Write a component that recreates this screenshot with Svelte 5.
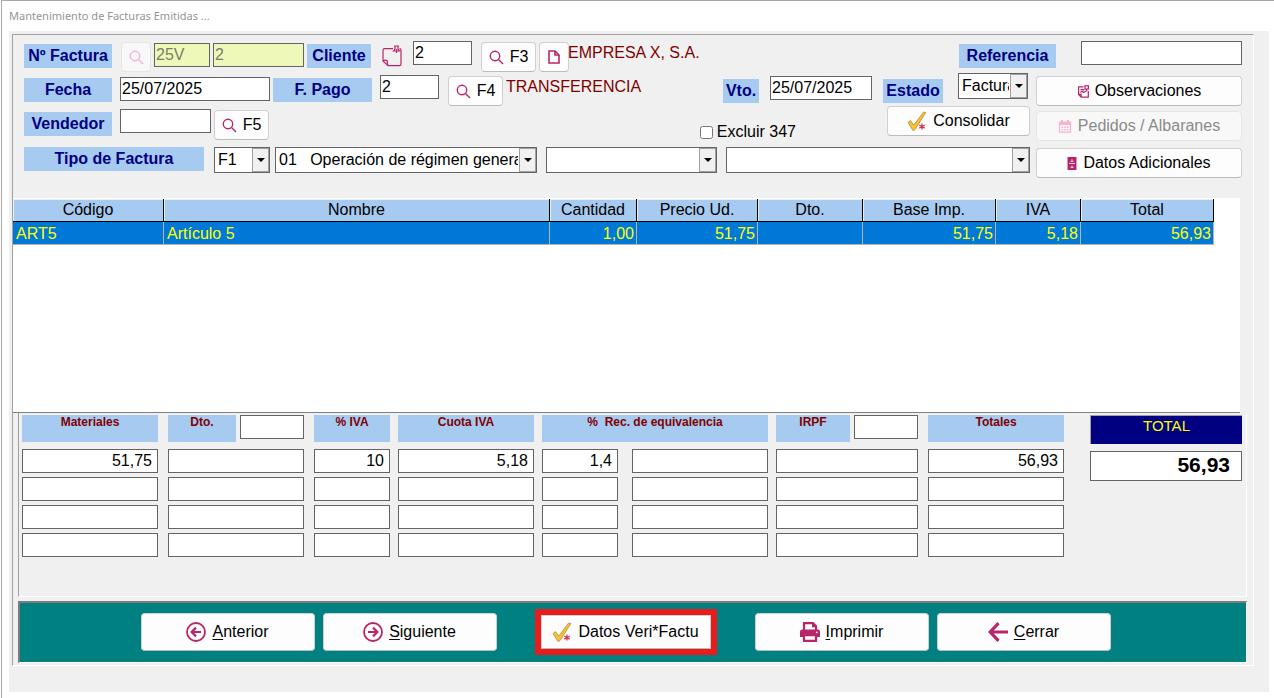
<script>
  const columns = ['Código', 'Nombre', 'Cantidad', 'Precio Ud.', 'Dto.', 'Base Imp.', 'IVA', 'Total'];
  const lines = [['ART5', 'Artículo 5', '1,00', '51,75', '', '51,75', '5,18', '56,93']];
  const totalNames = ['Materiales', 'Dto.', '% IVA', 'Cuota IVA', '% Rec.', 'Rec. de equivalencia', 'IRPF', 'Totales'];
  const totals = [
    ['51,75', '', '10', '5,18', '1,4', '', '', '56,93'],
    ['', '', '', '', '', '', '', ''],
    ['', '', '', '', '', '', '', ''],
    ['', '', '', '', '', '', '', '']
  ];
</script>

{#snippet search()}
  <svg class="ico" width="15" height="15" viewBox="0 0 15 15" fill="none" stroke="#b8266a" stroke-width="1.4" aria-hidden="true">
    <circle cx="6" cy="6" r="4.7" /><path d="M9.5 9.5 14 14" />
  </svg>
{/snippet}

{#snippet check()}
  <svg class="ico" width="20" height="21" viewBox="0 0 20 21" aria-hidden="true">
    <path d="M1 11.5 3.4 9.6 6.8 14 16.6 1 18.8 1.6 8 18.6 6 19.6Z" fill="#fbc02d" stroke="#a98c4a" stroke-width="0.8" />
    <path d="M15 12.6v6M12.3 14.1l5.4 3M17.7 14.1l-5.4 3" stroke="#d13a55" stroke-width="1.3" />
  </svg>
{/snippet}

<div class="window">
  <header>Mantenimiento de Facturas Emitidas ...</header>
  <main>
    <div class="panel">
      <form class="form" onsubmit={(e) => e.preventDefault()}>
        <div class="upper">
          <div class="left">
            <div class="row">
              <label class="tag w88" for="serie">Nº Factura</label>
              <button class="btn sq off" type="button" disabled aria-label="Buscar factura">{@render search()}</button>
              <input id="serie" class="box w56 key low" value="25V" disabled />
              <input class="box w91 key low" value="2" disabled aria-label="Número de factura" />
              <label class="tag w64" for="cliente">Cliente</label>
              <svg class="note" width="20" height="22" viewBox="0 0 20 22" fill="none" stroke="#b8266a" stroke-width="1.2" aria-hidden="true">
                <path d="M11 3.600H2.600Q1 3.600 1 5.200V16L6 20.600H17.400Q19 20.600 19 19V5.200Q19 3.600 17.500 3.600" />
                <path d="M1 16.400Q2 14.600 4.400 15.400 6 16 5.200 18L6 20.600" />
                <path d="M12 1h5M13 1v3L11.500 6h6L16 4V1M14.500 4v4" />
              </svg>
              <input id="cliente" class="box w59" value="2" />
              <button class="btn fkey" type="button">{@render search()}F3</button>
              <button class="btn sq" type="button" aria-label="Ficha del cliente">
                <svg width="12" height="14" viewBox="0 0 12 14" fill="none" stroke="#b8266a" stroke-width="1.6" aria-hidden="true">
                  <path d="M1 1H7L11 5V13H1Z" /><path d="M7 1V5H11" />
                </svg>
              </button>
              <output class="name">EMPRESA X, S.A.</output>
            </div>
            <div class="row">
              <label class="tag w88" for="fecha">Fecha</label>
              <input id="fecha" class="box w150 low" value="25/07/2025" />
              <label class="tag w99" for="pago">F. Pago</label>
              <input id="pago" class="box w59" value="2" />
              <button class="btn fkey" type="button">{@render search()}F4</button>
              <output class="name">TRANSFERENCIA</output>
            </div>
            <div class="row third">
              <label class="tag w88" for="vendedor">Vendedor</label>
              <input id="vendedor" class="box w91" />
              <button class="btn fkey" type="button">{@render search()}F5</button>
            </div>
          </div>
          <div class="right">
            <div class="reference">
              <label class="tag w97" for="ref">Referencia</label>
              <input id="ref" class="box w161" />
            </div>
            <div class="status">
              <div class="middle">
                <div class="due">
                  <div class="dates">
                    <label class="tag w36" for="vto">Vto.</label>
                    <input id="vto" class="box w102" value="25/07/2025" />
                    <label class="tag w60" for="estado">Estado</label>
                  </div>
                  <div class="combo w70">
                    <select id="estado"><option>Factura</option></select><span class="arrow"></span>
                  </div>
                </div>
                <div class="confirm">
                  <label class="exclude"><input type="checkbox" />Excluir 347</label>
                  <button class="btn consolidate" type="button">{@render check()}Consolidar</button>
                </div>
              </div>
              <div class="side">
                <button class="btn wide" type="button">
                  <svg width="12" height="13" viewBox="0 0 12 13" fill="none" stroke="#b8266a" stroke-width="1.2" aria-hidden="true">
                    <path d="M6.500 1.800H1.600V9.500L4.200 12.200H11.300V6M1.600 9.300H4.200V12M3.500 4.600h4M3.400 7.400l1.800-1.200 1.600 1.200 2.200-1.400" />
                    <rect x="8" y="0.8" width="3.4" height="3.2" /><path d="M9.700 4v2.400" />
                  </svg>
                  Observaciones
                </button>
                <button class="btn wide off" type="button" disabled>
                  <svg width="14" height="13" viewBox="0 0 14 13" aria-hidden="true">
                    <path d="M1.500 2.200h11v10H1.500Z" fill="none" stroke="#f0509a" stroke-width="1.2" />
                    <path d="M1 2h12v3H1ZM3 0h2v3H3ZM9 0h2v3H9Z" fill="#f0509a" />
                    <path d="M3.500 7.200h7M3.500 9.800h7" stroke="#f0509a" stroke-width="1.4" stroke-dasharray="1.6 1.1" />
                  </svg>
                  Pedidos / Albaranes
                </button>
              </div>
            </div>
          </div>
        </div>
        <div class="lower">
          <label class="tag w180" for="tipo">Tipo de Factura</label>
          <div class="combo w56"><select id="tipo"><option>F1</option></select><span class="arrow"></span></div>
          <div class="combo regime">
            <select aria-label="Clave de régimen"><option>01 &nbsp; Operación de régimen general</option></select><span class="arrow"></span>
          </div>
          <div class="combo cause"><select aria-label="Causa de exención"><option></option></select><span class="arrow"></span></div>
          <div class="combo detail"><select aria-label="Detalle"><option></option></select><span class="arrow"></span></div>
          <button class="btn wide" type="button">
            <svg width="10" height="13" viewBox="0 0 10 13" aria-hidden="true">
              <path d="M0.500 0h9v13h-9Z" fill="#b8266a" />
              <path d="M2 6.500h6M5 2.400v1.800M3.500 4.400h3M5 8.600v1.600M3.500 10.400h3" stroke="#f6d3e2" stroke-width="1" />
            </svg>
            Datos Adicionales
          </button>
        </div>
      </form>

      <div class="lines">
        <table>
          <colgroup>
            <col class="k1" /><col /><col class="k3" /><col class="k4" /><col class="k5" /><col class="k6" /><col class="k7" /><col class="k6" />
          </colgroup>
          <thead><tr>{#each columns as c}<th scope="col">{c}</th>{/each}</tr></thead>
          <tbody>
            {#each lines as line}
              <tr>{#each line as cell, i}<td class:num={i > 1}>{cell}</td>{/each}</tr>
            {/each}
          </tbody>
        </table>
      </div>

      <section class="totals">
        <div class="breakdown">
          <div class="trow heads">
            <div class="head c1">Materiales</div>
            <div class="pair c2"><label class="head" for="dto">Dto.</label><input id="dto" class="box w64" /></div>
            <div class="head c3">% IVA</div>
            <div class="head c4">Cuota IVA</div>
            <div class="head c56">% &nbsp;Rec. de equivalencia</div>
            <div class="pair c7"><label class="head" for="irpf">IRPF</label><input id="irpf" class="box w64" /></div>
            <div class="head c8">Totales</div>
          </div>
          {#each totals as row, r}
            <div class="trow">
              {#each row as value, i}
                <input class="box sum c{i + 1}" {value} readonly aria-label="{totalNames[i]}, línea {r + 1}" />
              {/each}
            </div>
          {/each}
        </div>
        <div class="grand">
          <label for="total">TOTAL</label>
          <input id="total" class="box" value="56,93" readonly />
        </div>
      </section>

      <nav class="bar">
        <div class="group">
          <button class="btn action" type="button">
            <svg width="20" height="20" viewBox="0 0 20 20" fill="none" stroke="#b8266a" stroke-width="1.8" aria-hidden="true">
              <circle cx="10" cy="10" r="9" /><path d="M15 10H6M10 5.600 5.600 10 10 14.400" stroke-width="2.2" />
            </svg>
            <span><u>A</u>nterior</span>
          </button>
          <button class="btn action" type="button">
            <svg width="20" height="20" viewBox="0 0 20 20" fill="none" stroke="#b8266a" stroke-width="1.8" aria-hidden="true">
              <circle cx="10" cy="10" r="9" /><path d="M5 10h9M10 5.600 14.400 10 10 14.400" stroke-width="2.2" />
            </svg>
            <span><u>S</u>iguiente</span>
          </button>
        </div>
        <div class="marked">
          <button class="btn" type="button">{@render check()}Datos Veri*Factu</button>
        </div>
        <div class="group">
          <button class="btn action" type="button">
            <svg width="20" height="20" viewBox="0 0 20 20" aria-hidden="true">
              <path d="M4 9V1.200h9L16 4.200V9" fill="none" stroke="#b8266a" stroke-width="2.200" />
              <path d="M12 1v4.200H16.500Z" fill="#b8266a" />
              <path d="M2 7.500h16q2 0 2 2V15H0V9.500q0-2 2-2Z" fill="#b8266a" />
              <path d="M4 13.200H16V18.800H4Z" fill="#fdfdfd" stroke="#b8266a" stroke-width="2.200" />
              <circle cx="16.800" cy="10.300" r="0.900" fill="#fff" />
            </svg>
            <span><u>I</u>mprimir</span>
          </button>
          <button class="btn action" type="button">
            <svg width="20" height="20" viewBox="0 0 20 20" fill="none" stroke="#b8266a" stroke-width="3.2" aria-hidden="true">
              <path d="M20 10H3M10.500 1.200 2.200 10 10.500 18.800" />
            </svg>
            <span><u>C</u>errar</span>
          </button>
        </div>
      </nav>
    </div>
  </main>
</div>

<style>
  :global(body) { margin: 0; background: #fff; }
  .window, .window * { box-sizing: border-box; }
  .window {
    display: flex; flex-direction: column;
    min-height: 100vh; margin-left: 1px; padding: 0 5px 6px 7px;
    border-top: 1px solid #a6a6a6; border-left: 1px solid #a6a6a6;
    font: 16px/18px "Liberation Sans", Arial, sans-serif; color: #000;
  }
  button, input, select { font: inherit; color: inherit; margin: 0; }
  header { height: 30px; font: 11px/30px "Noto Sans", sans-serif; color: #949494; }
  main { flex: 1; display: flex; padding: 3px 15px 26px 3px; background: #f0f0f0; }
  .panel {
    flex: 1; min-width: 0; display: flex; flex-direction: column;
    border: 1px solid #fff; border-top-color: #a0a0a0; border-left-color: #a0a0a0;
  }

  .form { padding: 6px 11px 20px; }
  .upper, .status, .row, .reference, .due, .dates, .confirm, .lower { display: flex; align-items: flex-start; }
  .upper { justify-content: space-between; }
  .left { display: flex; flex-direction: column; gap: 3px; }
  .row { min-height: 31px; gap: 3px; }
  .row .tag, .reference .tag, .dates .tag { margin-top: 3px; }
  .row .btn { margin-top: 1px; }
  .row .low { margin-top: 2px; }
  .row .tag + .box { margin-left: 5px; }
  .row .tag + .btn, .row .btn.fkey { margin-left: 6px; }
  .note + .box, .tag + .note { margin-left: 8px; }
  .row .btn.sq + .name { margin-left: -4px; }
  .third .btn.fkey { margin-left: 0; }
  .name { color: #800000; line-height: 24px; white-space: nowrap; }
  .note { margin-top: 4px; flex: none; }

  .tag {
    flex: none; height: 24px; line-height: 24px; text-align: center; white-space: nowrap;
    background: #a6caf0; color: #000080; font-weight: bold;
  }
  .box { flex: none; height: 24px; padding: 0 1px 1px; background: #fff; border: 1px solid #646464; border-radius: 0; outline: 0; }
  .box.key { background: #eef9b9; color: #7c7c6c; opacity: 1; }
  .w36 { width: 36px; } .w56 { width: 56px; } .w59 { width: 59px; } .w60 { width: 60px; }
  .w64 { width: 64px; } .w70 { width: 70px; } .w88 { width: 88px; } .w91 { width: 91px; }
  .w97 { width: 97px; } .w99 { width: 99px; } .w102 { width: 102px; } .w150 { width: 150px; }
  .w161 { width: 161px; } .w180 { width: 180px; }

  .btn {
    flex: none; display: inline-flex; align-items: center; justify-content: center; gap: 6px;
    height: 30px; padding: 0; background: #fdfdfd; white-space: nowrap;
    border: 1px solid #d0d0d0; border-bottom-color: #bbb; border-radius: 4px;
  }
  .btn svg { flex: none; }
  .sq { width: 30px; }
  .fkey { width: 55px; }
  .off { background: #f8f8f8; border-color: #e6e6e6; color: #8a8a8a; }
  .off svg { opacity: 0.4; }
  .off .ico { stroke: #f0509a; }
  .wide { width: 206px; }
  .consolidate { width: 143px; }

  .right { display: flex; flex-direction: column; gap: 5px; }
  .reference { justify-content: flex-end; gap: 25px; }
  .status { align-items: stretch; gap: 6px; }
  .middle { display: flex; flex-direction: column; gap: 3px; }
  .due { justify-content: flex-end; gap: 15px; padding-right: 2px; }
  .dates { gap: 11px; padding-top: 3px; }
  .confirm { flex: 1; gap: 91px; }
  .exclude { align-self: flex-end; display: flex; align-items: center; gap: 4px; white-space: nowrap; }
  .exclude input { width: 13px; height: 13px; }
  .side { display: flex; flex-direction: column; gap: 5px; padding-top: 3px; }

  .lower { gap: 9px; padding-top: 6px; }
  .lower .tag { margin-right: 1px; }
  .lower .btn { margin: 1px 0 0 -3px; }
  .combo { position: relative; height: 26px; min-width: 0; }
  .lower .regime { flex: 262 1 0; margin-left: -4px; }
  .cause { flex: 171 1 0; }
  .detail { flex: 304 1 0; }
  .combo select {
    appearance: none; display: block; width: 100%; height: 100%; padding: 0 18px 0 3px; outline: 0;
    background: #fff; border: 1px solid #646464; border-radius: 0; text-overflow: clip;
  }
  .arrow {
    position: absolute; top: 1px; right: 1px; bottom: 1px; width: 17px; pointer-events: none;
    background: #f0f0f0; border: 1px solid #a0a0a0;
  }
  .arrow::after {
    content: ""; position: absolute; left: 4px; top: 9px;
    border: 4px solid transparent; border-top-color: #000; border-bottom: 0;
  }

  .lines { flex: 1; margin-right: 13px; padding-top: 1px; background: #fff; border-bottom: 1px solid #808080; }
  table { width: calc(100% - 26px); table-layout: fixed; border-collapse: separate; border-spacing: 0; }
  .k1 { width: 151px; } .k3 { width: 87px; } .k4 { width: 121px; } .k5 { width: 105px; }
  .k6 { width: 133px; } .k7 { width: 85px; }
  th {
    height: 23px; padding: 0; line-height: 22px; font-weight: normal; background: #a6caf0;
    border-right: 1px solid #000; border-bottom: 1px solid #000; box-shadow: inset 1px 1px #e4effa;
  }
  td {
    height: 23px; padding: 1px 2px 0 3px; line-height: 21px; background: #0078d7; color: #ff0;
    border-right: 1px solid #b4b4b4; border-bottom: 1px solid #b4b4b4;
  }
  td.num { text-align: right; }

  .totals {
    display: flex; gap: 26px; margin: 0 6px 4px 5px; padding: 2px 4px 39px 3px;
    border: 1px solid #fff; border-top: 0; border-left-color: #a0a0a0;
  }
  .breakdown { flex: 1; min-width: 0; display: flex; flex-direction: column; gap: 4px; }
  .trow { display: flex; }
  .heads { margin-bottom: 3px; }
  .head {
    height: 27px; text-align: center; white-space: nowrap; font-weight: bold; font-size: 12px; line-height: 15px;
    background: #a6caf0; color: #800000;
  }
  .pair { display: flex; gap: 4px; }
  .pair .head { flex: 1; }
  .c1, .c2, .c4, .c6, .c8 { flex: 128 1 8px; }
  .c3, .c5 { flex: 68 1 8px; }
  .c7 { flex: 134 1 8px; }
  .c56 { flex: 196 1 30px; }
  .c1, .c2, .c7 { margin-right: 10px; }
  .c3, .c4, .c6, .c56 { margin-right: 8px; }
  .c5 { margin-right: 14px; }
  .sum { min-width: 0; text-align: right; padding-right: 5px; }
  .grand { width: 152px; display: flex; flex-direction: column; gap: 7px; }
  .grand label {
    height: 29px; font-size: 15px; line-height: 19px; text-align: center; background: #000080; color: #ff0;
    border-top: 1px solid #a0a0a0; border-left: 1px solid #a0a0a0;
  }
  .grand .box { width: 100%; height: 30px; padding: 0 11px 2px; text-align: right; font-size: 21px; font-weight: bold; }

  .bar {
    display: flex; flex-wrap: wrap; align-items: center; justify-content: center; gap: 38px;
    min-height: 62px; margin: 0 6px 2px 5px; padding: 0 15px 1px 0; background: #008080;
    border: 1px solid #fff; border-top: 2px solid #7c7c7c; border-left: 2px solid #7c7c7c;
  }
  .group { display: flex; gap: 8px; }
  .action { width: 174px; height: 38px; }
  .marked { display: flex; border: 6px solid #e81c1c; }
  .marked .btn { width: 170px; height: 34px; border-radius: 0; }
  u { text-underline-offset: 2px; text-decoration-thickness: 1px; }
</style>
